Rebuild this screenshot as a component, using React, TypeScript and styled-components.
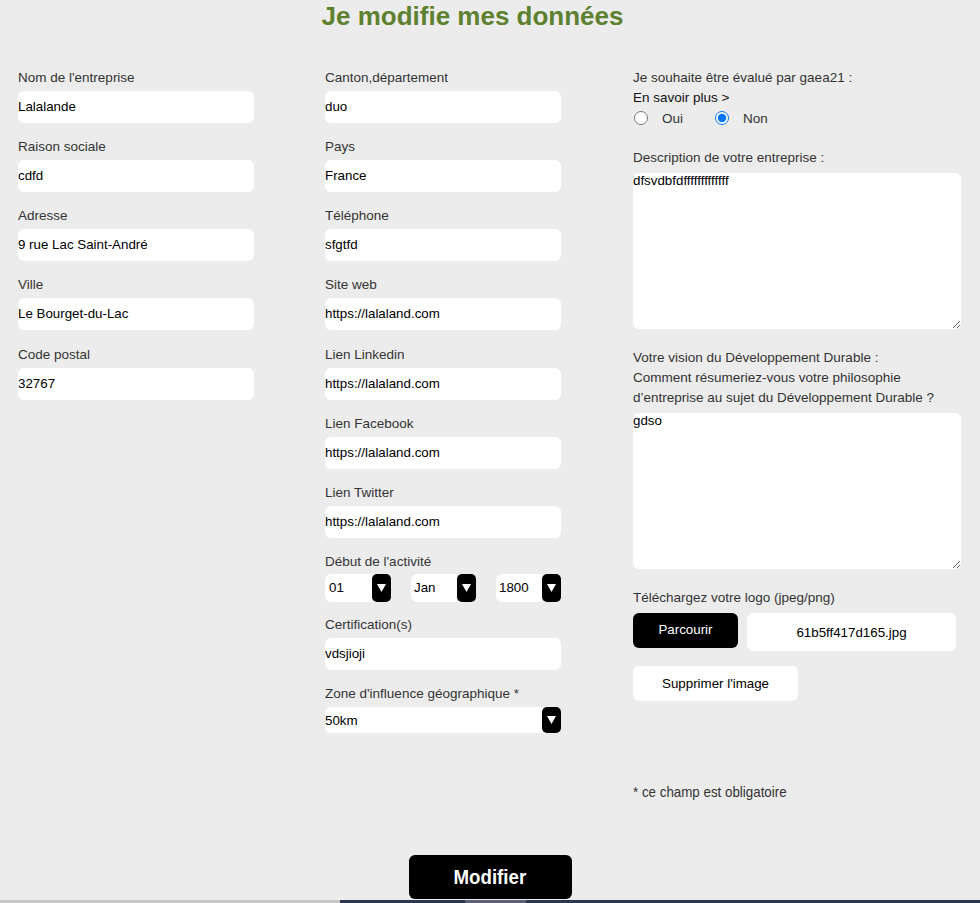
import React from "react";
import styled, { createGlobalStyle } from "styled-components";

const GlobalStyle = createGlobalStyle`
  html, body { margin: 0; padding: 0; background: #ececec; }
  body { font-family: "Liberation Sans", Arial, sans-serif; color: #333; }
  * { box-sizing: border-box; }
`;

const Page = styled.div`
  width: 980px;
  min-height: 903px;
  background: #ececec;
  overflow: hidden;
`;

const Title = styled.h1`
  margin: 0;
  padding-top: 1px;
  width: 945px;
  font-size: 26px;
  line-height: 30px;
  font-weight: bold;
  text-align: center;
  color: #5e8130;
`;

const FormGrid = styled.div`
  display: grid;
  grid-template-columns: 307px 308px 328px;
  padding-left: 18px;
  margin-top: 37px;
  align-items: start;
`;

const Column = styled.div`
  display: flex;
  flex-direction: column;
  gap: 14.15px;
`;

const Field = styled.div<{ $after?: number }>`
  display: flex;
  flex-direction: column;
  margin-bottom: ${(p) => p.$after ?? 0}px;
`;

const Label = styled.label<{ $dark?: boolean }>`
  display: block;
  font-size: 13.5px;
  line-height: 20px;
  color: ${(p) => (p.$dark ? "#111" : "#333")};
  white-space: nowrap;
`;

const TextInput = styled.input`
  margin-top: 3px;
  width: 236px;
  height: 32px;
  border: none;
  border-radius: 6px;
  padding: 0 0 1px;
  background: #fff;
  font-family: "Liberation Sans", Arial, sans-serif;
  font-size: 13.33px;
  color: #000;
  outline: none;
`;

const DateRow = styled.div`
  margin-top: 2px;
  display: flex;
  gap: 20px;
`;

const SelectBox = styled.div<{ $w: number; $h: number; $pad: number }>`
  width: ${(p) => p.$w}px;
  height: ${(p) => p.$h}px;
  margin-top: ${(p) => (p.$h === 26 ? 3 : 0)}px;
  background: #fff;
  border-radius: 6px;
  display: flex;
  align-items: center;
  justify-content: space-between;
  padding-left: ${(p) => p.$pad}px;
  font-size: 13.33px;
  color: #000;
`;

const ArrowBox = styled.span`
  width: 19px;
  height: 100%;
  background: #000;
  border-radius: 5px;
  display: flex;
  align-items: center;
  justify-content: center;
`;

const Arrow = () => (
  <ArrowBox>
    <svg width="9" height="8" viewBox="0 0 9 8">
      <polygon points="0,0 9,0 4.5,8" fill="#fff" />
    </svg>
  </ArrowBox>
);

const Select = ({ value, w, h, pad }: { value: string; w: number; h: number; pad: number }) => (
  <SelectBox $w={w} $h={h} $pad={pad}>
    <span>{value}</span>
    <Arrow />
  </SelectBox>
);

const RightColumn = styled.div`
  display: flex;
  flex-direction: column;
`;

const RadioRow = styled.div`
  height: 20px;
  display: flex;
  align-items: center;
  font-size: 13.5px;
  color: #333;
`;

const RadioOption = styled.label<{ $gap: number }>`
  display: flex;
  align-items: center;
  margin-right: ${(p) => p.$gap}px;

  input {
    width: 14px;
    height: 14px;
    margin: 0 14px 0 1px;
  }
`;

const Spaced = styled.div<{ $top: number }>`
  margin-top: ${(p) => p.$top}px;
`;

const TextArea = styled.textarea`
  display: block;
  margin-top: 5px;
  width: 328px;
  height: 156px;
  border: none;
  border-radius: 6px;
  padding: 0;
  background: #fff;
  font-family: "Liberation Sans", Arial, sans-serif;
  font-size: 13.33px;
  color: #000;
  outline: none;
`;

const UploadRow = styled.div`
  margin-top: 5px;
  display: flex;
  align-items: flex-start;
  gap: 9px;
`;

const BlackButton = styled.button`
  width: 105px;
  height: 35px;
  border: none;
  border-radius: 6px;
  background: #000;
  color: #fff;
  font-family: "Liberation Sans", Arial, sans-serif;
  font-size: 13.33px;
  padding: 0 0 3px;
`;

const FileBox = styled.div`
  width: 209px;
  height: 38px;
  border-radius: 6px;
  background: #fff;
  display: flex;
  align-items: center;
  justify-content: center;
  font-size: 13.33px;
  color: #000;
`;

const WhiteButton = styled.button`
  margin-top: 15px;
  width: 165px;
  height: 35px;
  border: none;
  border-radius: 6px;
  background: #fff;
  color: #000;
  font-family: "Liberation Sans", Arial, sans-serif;
  font-size: 13.33px;
  padding: 0;
`;

const Note = styled.div`
  margin-top: 81px;
  line-height: 20px;
  font-size: 15px;
  color: #333;
  transform: scaleX(0.89);
  transform-origin: left center;
  white-space: nowrap;
`;

const SubmitRow = styled.div`
  margin-top: 53px;
  display: flex;
  justify-content: center;
`;

const SubmitButton = styled.button`
  width: 163px;
  height: 44px;
  border: none;
  border-radius: 6px;
  background: #000;
  color: #fff;
  font-family: "Liberation Sans", Arial, sans-serif;
  padding: 0;

  span {
    display: inline-block;
    font-weight: bold;
    font-size: 21px;
    transform: scaleX(0.89);
  }
`;

const FooterBar = styled.div`
  margin-top: 1px;
  height: 3px;
  display: flex;
`;

const FooterSeg = styled.div<{ $w?: number; $c: string }>`
  height: 100%;
  background: ${(p) => p.$c};
  ${(p) => (p.$w ? `width: ${p.$w}px;` : "flex: 1;")}
`;

const col1 = [
  ["Nom de l'entreprise", "Lalalande"],
  ["Raison sociale", "cdfd"],
  ["Adresse", "9 rue Lac Saint-André"],
  ["Ville", "Le Bourget-du-Lac"],
  ["Code postal", "32767"],
];

const col2 = [
  ["Canton,département", "duo"],
  ["Pays", "France"],
  ["Téléphone", "sfgtfd"],
  ["Site web", "https://lalaland.com"],
  ["Lien Linkedin", "https://lalaland.com"],
  ["Lien Facebook", "https://lalaland.com"],
  ["Lien Twitter", "https://lalaland.com"],
];

export default function App() {
  return (
    <Page>
      <GlobalStyle />
      <Title>Je modifie mes données</Title>
      <FormGrid>
        <Column>
          {col1.map(([l, v]) => (
            <Field key={l}>
              <Label>{l}</Label>
              <TextInput defaultValue={v} />
            </Field>
          ))}
        </Column>
        <Column>
          {col2.map(([l, v]) => (
            <Field key={l}>
              <Label>{l}</Label>
              <TextInput defaultValue={v} />
            </Field>
          ))}
          <Field $after={-1}>
            <Label>Début de l'activité</Label>
            <DateRow>
              <Select value="01" w={66} h={28} pad={4} />
              <Select value="Jan" w={65} h={28} pad={3} />
              <Select value="1800" w={65} h={28} pad={3} />
            </DateRow>
          </Field>
          <Field>
            <Label>Certification(s)</Label>
            <TextInput defaultValue="vdsjioji" />
          </Field>
          <Field>
            <Label>Zone d'influence géographique *</Label>
            <Select value="50km" w={236} h={26} pad={0} />
          </Field>
        </Column>
        <RightColumn>
          <Label>Je souhaite être évalué par gaea21 :</Label>
          <Label $dark>En savoir plus &gt;</Label>
          <RadioRow>
            <RadioOption $gap={31}>
              <input type="radio" name="eval" />
              Oui
            </RadioOption>
            <RadioOption $gap={0}>
              <input type="radio" name="eval" defaultChecked />
              Non
            </RadioOption>
          </RadioRow>
          <Spaced $top={20}>
            <Label>Description de votre entreprise :</Label>
            <TextArea defaultValue="dfsvdbfdfffffffffffff" />
          </Spaced>
          <Spaced $top={19}>
            <Label>Votre vision du Développement Durable :</Label>
            <Label>Comment résumeriez-vous votre philosophie</Label>
            <Label>d’entreprise au sujet du Développement Durable ?</Label>
            <TextArea defaultValue="gdso" />
          </Spaced>
          <Spaced $top={19}>
            <Label>Téléchargez votre logo (jpeg/png)</Label>
            <UploadRow>
              <BlackButton>Parcourir</BlackButton>
              <FileBox>61b5ff417d165.jpg</FileBox>
            </UploadRow>
            <WhiteButton>Supprimer l'image</WhiteButton>
          </Spaced>
          <Note>* ce champ est obligatoire</Note>
        </RightColumn>
      </FormGrid>
      <SubmitRow>
        <SubmitButton>
          <span>Modifier</span>
        </SubmitButton>
      </SubmitRow>
      <FooterBar>
        <FooterSeg $w={340} $c="#c8c8c8" />
        <FooterSeg $w={125} $c="#2d3651" />
        <FooterSeg $w={61} $c="#5a6176" />
        <FooterSeg $c="#2d3651" />
      </FooterBar>
    </Page>
  );
}
